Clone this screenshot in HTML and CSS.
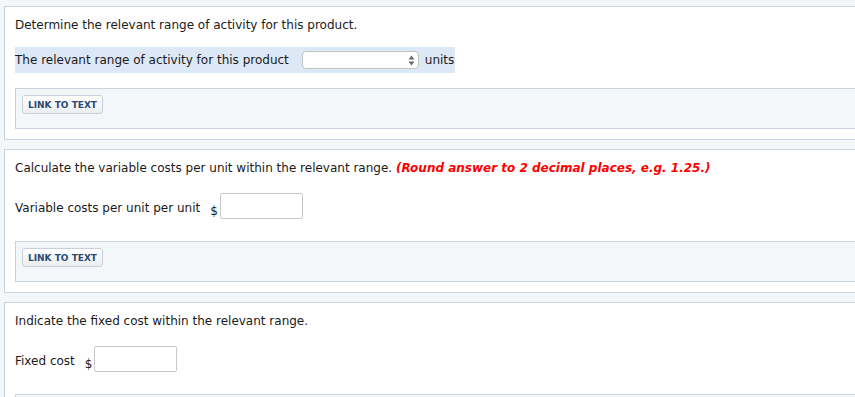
FILE: index.html
```html
<html>
	<head>
		<meta charset="UTF-8"/>
		<link rel="stylesheet" href="styles.css">
	</head>
	<body>
		<div id="perguntas">
			<div class="pergunta">
				<p class="enunciado">Determine the relevant range of activity for this product.</p>
				<div class="linhaResposta destaque">
					<span>The relevant range of activity for this product</span>
					<span class="caixaSelect">
						<select></select>
						<svg class="setas" width="7" height="11" viewBox="0 0 7 11"><path d="M3.5 0.5L6.5 4.5H0.5Z M3.5 10.5L6.5 6.5H0.5Z" fill="#6b6b6b"/></svg>
					</span>
					<span class="unidade">units</span>
				</div>
				<div class="caixaLink"><button type="button" class="botaoLink">LINK TO TEXT</button></div>
			</div>
			<div class="pergunta">
				<p class="enunciado">Calculate the variable costs per unit within the relevant range. <em class="aviso">(Round answer to 2 decimal places, e.g. 1.25.)</em></p>
				<div class="linhaResposta">
					<span>Variable costs per unit per unit</span>
					<span class="cifrao">$</span>
					<input type="text" class="caixaValor"/>
				</div>
				<div class="caixaLink"><button type="button" class="botaoLink">LINK TO TEXT</button></div>
			</div>
			<div class="pergunta">
				<p class="enunciado">Indicate the fixed cost within the relevant range.</p>
				<div class="linhaResposta">
					<span>Fixed cost</span>
					<span class="cifrao">$</span>
					<input type="text" class="caixaValor"/>
				</div>
				<div class="caixaLink"><button type="button" class="botaoLink">LINK TO TEXT</button></div>
			</div>
		</div>
	</body>
</html>
```
FILE: styles.css
```css
body{
	margin:0;
	background-color:#f4f7fa;
	font-family:"DejaVu Sans", Verdana, sans-serif;
	font-size:12px;
	color:#1a1a1a;
	overflow:hidden;
}
#perguntas{
	margin:6px -20px 0 4px;
}
.pergunta{
	background-color:white;
	border:1px solid #c9d3dd;
	padding:11px 10px 10px 10px;
	margin-bottom:9px;
}
.enunciado{
	margin:0;
	line-height:15px;
}
.aviso{
	color:#f00;
	font-weight:bold;
}
.linhaResposta{
	display:flex;
	align-items:center;
	margin-top:14px;
	height:36px;
}
.destaque{
	display:inline-flex;
	height:26px;
	background-color:#dde8f7;
	padding-right:1px;
}
.caixaSelect{
	position:relative;
	margin-left:13px;
	height:18px;
}
.caixaSelect select{
	appearance:none;
	-webkit-appearance:none;
	width:117px;
	height:18px;
	border:1px solid #c3c3c3;
	border-radius:4px;
	background-color:white;
	margin:0;
	display:block;
}
.setas{
	position:absolute;
	right:4px;
	top:4px;
}
.unidade{
	margin-left:6px;
}
.cifrao{
	align-self:flex-end;
	margin:0 2px 8px 10px;
	line-height:14px;
}
.caixaValor{
	width:83px;
	height:26px;
	box-sizing:border-box;
	border:1px solid #c8c8c8;
	border-radius:2px;
	margin:3px 0 7px 0;
	align-self:flex-start;
}
.caixaLink{
	margin-top:15px;
	background-color:#f4f7fa;
	border:1px solid #c9d3dd;
	padding:6px 6px 14px 6px;
}
.botaoLink{
	display:block;
	width:81px;
	height:19px;
	padding:0;
	border:1px solid #c9d0d8;
	border-radius:3px;
	background:linear-gradient(#ffffff, #eaeef2);
	font-family:"DejaVu Sans", Verdana, sans-serif;
	font-weight:bold;
	font-size:9px;
	color:#2b4a72;
}
```
